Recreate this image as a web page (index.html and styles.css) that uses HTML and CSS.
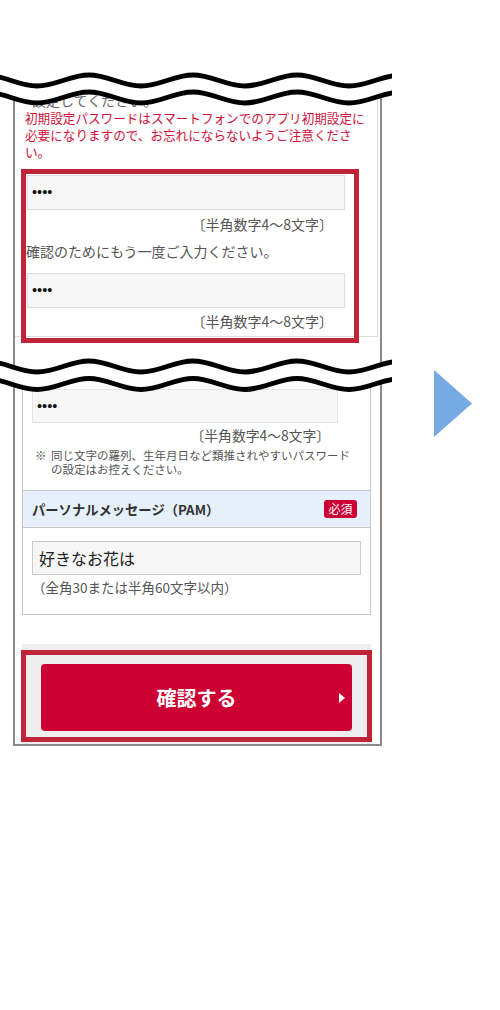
FILE: index.html
```html
<!DOCTYPE html>
<html lang="ja">
<head>
<meta charset="utf-8">
<title>PAM 設定</title>
<link rel="stylesheet" href="styles.css">
</head>
<body>
<div class="stage">
  <div class="shot">
    <div class="phone">
      <div class="part part-top">
        <div class="card card-top">
          <p class="lead">設定してください。</p>
          <p class="warn">初期設定パスワードはスマートフォンでのアプリ初期設定に<br>必要になりますので、お忘れにならないようご注意くださ<br>い。</p>
          <div class="field field-a"><span class="dots">••••</span></div>
          <p class="hint hint-a">〔半角数字4〜8文字〕</p>
          <p class="label">確認のためにもう一度ご入力ください。</p>
          <div class="field field-a field-a2"><span class="dots">••••</span></div>
          <p class="hint hint-a hint-a2">〔半角数字4〜8文字〕</p>
        </div>
      </div>
      <div class="part part-bottom">
        <div class="card card-bottom">
          <div class="field field-b"><span class="dots">••••</span></div>
          <p class="hint hint-b">〔半角数字4〜8文字〕</p>
          <p class="note"><span class="mark">※</span><span class="note-text">同じ文字の羅列、生年月日など類推されやすいパスワード<br>の設定はお控えください。</span></p>
          <div class="sec-head"><span class="sec-title">パーソナルメッセージ（PAM）</span><span class="badge">必須</span></div>
          <div class="sec-body">
            <div class="field field-pam">好きなお花は</div>
            <p class="hint hint-pam">（全角30または半角60文字以内）</p>
          </div>
        </div>
        <div class="action">
          <div class="submit">確認する<span class="caret"></span></div>
        </div>
      </div>
    </div>

    <svg class="wave wave-top" width="392" height="60" viewBox="0 0 392 60">
      <path class="wave-fill" d="M -15 32 C 4 32 18 43 37 43 S 70 32 89 32 S 122 43 141 43 S 174 32 193 32 S 226 43 245 43 S 278 32 297 32 S 330 43 349 43 S 382 32 401 32 L 401 0 L -15 0 Z"/>
      <path class="wave-line" d="M -15 15 C 4 15 18 26 37 26 S 70 15 89 15 S 122 26 141 26 S 174 15 193 15 S 226 26 245 26 S 278 15 297 15 S 330 26 349 26 S 382 15 401 15"/>
      <path class="wave-line" d="M -15 32 C 4 32 18 43 37 43 S 70 32 89 32 S 122 43 141 43 S 174 32 193 32 S 226 43 245 43 S 278 32 297 32 S 330 43 349 43 S 382 32 401 32"/>
    </svg>

    <svg class="wave wave-mid" width="392" height="60" viewBox="0 0 392 60">
      <path class="wave-fill" fill-rule="evenodd" d="M -15 38.5 C 4 38.5 18 49.5 37 49.5 S 70 38.5 89 38.5 S 122 49.5 141 49.5 S 174 38.5 193 38.5 S 226 49.5 245 49.5 S 278 38.5 297 38.5 S 330 49.5 349 49.5 S 382 38.5 401 38.5 L 401 0 L -15 0 Z M -15 21 C 4 21 18 32 37 32 S 70 21 89 21 S 122 32 141 32 S 174 21 193 21 S 226 32 245 32 S 278 21 297 21 S 330 32 349 32 S 382 21 401 21 L 401 0 L -15 0 Z"/>
      <path class="wave-line" d="M -15 21 C 4 21 18 32 37 32 S 70 21 89 21 S 122 32 141 32 S 174 21 193 21 S 226 32 245 32 S 278 21 297 21 S 330 32 349 32 S 382 21 401 21"/>
      <path class="wave-line" d="M -15 38.5 C 4 38.5 18 49.5 37 49.5 S 70 38.5 89 38.5 S 122 49.5 141 49.5 S 174 38.5 193 38.5 S 226 49.5 245 49.5 S 278 38.5 297 38.5 S 330 49.5 349 49.5 S 382 38.5 401 38.5"/>
    </svg>

    <div class="callout callout-pass"></div>
    <div class="callout callout-submit"></div>
  </div>

  <svg class="next-arrow" width="38" height="67" viewBox="0 0 38 67">
    <polygon points="0,0 38,33.5 0,67" />
  </svg>
</div>
</body>
</html>
```

FILE: styles.css
```css
* {
  box-sizing: border-box;
  margin: 0;
  padding: 0;
}

html, body {
  background: #ffffff;
}

body {
  margin: 0;
  font-family: "Noto Sans CJK JP", "Noto Sans", sans-serif;
  color: #555555;
}

.stage {
  display: flex;
  align-items: flex-start;
  width: 500px;
  height: 1010px;
  overflow: hidden;
}

.shot {
  position: relative;
  flex: none;
  width: 392px;
  padding-top: 80px;
}

.phone {
  margin-left: 13px;
  width: 369px;
  border: 2px solid #8a8a8a;
  background: #ffffff;
}

/* ---------- upper part ---------- */
.part-top {
  height: 293px;
}

.card-top {
  margin-right: 2px;
  border-right: 1px solid #dcdcdc;
  border-bottom: 1px solid #dcdcdc;
  padding: 10px 0 6px 0;
}

.lead {
  padding-left: 17px;
  font-size: 14px;
  line-height: 17px;
  color: #666666;
}

.warn {
  padding-left: 10px;
  font-size: 12.6px;
  line-height: 17px;
  color: #d0103a;
}

.field {
  background: #f7f7f7;
  border: 1px solid #dddddd;
  display: flex;
  align-items: center;
}

.dots {
  font-family: "Liberation Sans", sans-serif;
  font-size: 14.5px;
  color: #111111;
  line-height: 1;
}

.field-a {
  margin: 15px 0 0 12px;
  width: 318px;
  height: 35px;
  padding-left: 4px;
}

.field-a2 {
  margin-top: 13px;
}

.hint {
  font-size: 14px;
  line-height: 17px;
  color: #555555;
}

.hint-a {
  margin: 6px 0 0 12px;
  width: 318px;
  text-align: right;
  padding-right: 12px;
}

.hint-a2 {
  margin-top: 5px;
}

.label {
  margin-top: 10px;
  padding-left: 11px;
  font-size: 14px;
  line-height: 17px;
  color: #555555;
}

/* ---------- lower part ---------- */
.card-bottom {
  margin-left: 7px;
  width: 349px;
  border: 1px solid #c8c8c8;
  border-top: 0;
  padding-top: 14px;
}

.field-b {
  margin-left: 9px;
  width: 306px;
  height: 34px;
  padding-left: 4px;
  border-color: #e4e4e4;
}

.hint-b {
  margin: 4px 0 0 9px;
  width: 306px;
  text-align: right;
  padding-right: 8px;
  font-size: 13.8px;
}

.note {
  display: flex;
  margin: 4px 0 0 12px;
  font-size: 11.5px;
  line-height: 14px;
  color: #555555;
}

.mark {
  flex: none;
  width: 16px;
}

.sec-head {
  margin-top: 14px;
  height: 38px;
  display: flex;
  align-items: center;
  justify-content: space-between;
  padding: 0 13px 0 9px;
  background: #e6f0fb;
  border-top: 1px solid #c8c8c8;
  border-bottom: 1px solid #c8c8c8;
}

.sec-title {
  font-size: 13.3px;
  font-weight: 700;
  color: #333333;
  line-height: 17px;
}

.badge {
  width: 33px;
  height: 18px;
  border-radius: 3px;
  background: #cc0033;
  color: #ffffff;
  font-size: 12px;
  line-height: 18px;
  text-align: center;
}

.sec-body {
  padding: 13px 0 18px 9px;
}

.field-pam {
  width: 329px;
  height: 34px;
  padding-left: 6px;
  border-color: #cccccc;
  background: #f6f6f6;
  font-size: 16px;
  color: #222222;
}

.hint-pam {
  margin-top: 3.5px;
  font-size: 13.5px;
}

.action {
  margin: 29px 0 0 7px;
  width: 349px;
  background: #eeeeee;
  padding: 20px 19px 13px 19px;
}

.submit {
  position: relative;
  height: 67px;
  border-radius: 4px;
  background: #cc0033;
  color: #ffffff;
  font-size: 20px;
  font-weight: 700;
  display: flex;
  align-items: center;
  justify-content: center;
}

.caret {
  position: absolute;
  right: 7px;
  top: 29px;
  width: 0;
  height: 0;
  border-left: 6px solid #ffffff;
  border-top: 5px solid transparent;
  border-bottom: 5px solid transparent;
}

/* ---------- overlays ---------- */
.wave {
  position: absolute;
  left: 0;
  display: block;
  overflow: hidden;
}

.wave-top {
  top: 60px;
}

.wave-mid {
  top: 340px;
}

.wave-fill {
  fill: #ffffff;
}

.wave-line {
  fill: none;
  stroke: #000000;
  stroke-width: 5;
}

.callout {
  position: absolute;
  border: 5px solid #bf2438;
}

.callout-pass {
  left: 21px;
  top: 169px;
  width: 338px;
  height: 174px;
}

.callout-submit {
  left: 21px;
  top: 650px;
  width: 351px;
  height: 92px;
}

.next-arrow {
  flex: none;
  display: block;
  margin: 370px 0 0 42px;
  fill: #75aae3;
}
```
